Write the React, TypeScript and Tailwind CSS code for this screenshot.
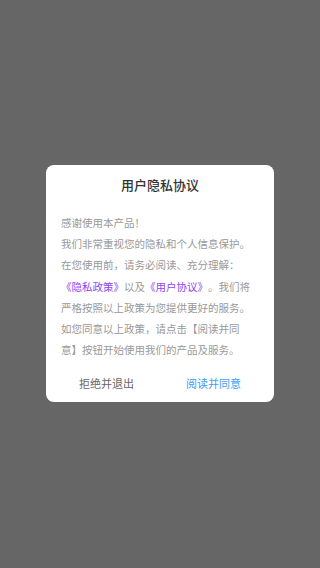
export default function App() {
  const font = { fontFamily: '"Noto Sans CJK SC", "Noto Sans", sans-serif' };
  return (
    <div
      className="w-[320px] h-[568px] bg-[#666666] flex items-start justify-center [text-spacing-trim:space-all]"
      style={font}
    >
      <div className="mt-[165px] w-[228px] h-[237px] bg-white rounded-[8px] flex flex-col">
        <div className="pt-[10px] text-center text-[13px] leading-[20px] font-medium text-[#333333]">
          用户隐私协议
        </div>
        <div className="mt-[17px] px-[15px] text-[10.5px] leading-[21.2px] text-[#999999]">
          <p>感谢使用本产品！</p>
          <p>我们非常重视您的隐私和个人信息保护。</p>
          <p>在您使用前，请务必阅读、充分理解：</p>
          <p>
            <span className="text-[#8c46f5]">《隐私政策》</span>以及
            <span className="text-[#8c46f5]">《用户协议》</span>
            。我们将严格按照以上政策为您提供更好的服务。如您同意以上政策，请点击【阅读并同意】按钮开始使用我们的产品及服务。
          </p>
        </div>
        <div className="mt-[13px] px-[7px] flex text-[11px] leading-[20px]">
          <button className="flex-1 text-center text-[#666666]">拒绝并退出</button>
          <button className="flex-1 text-center text-[#3d9df7]">阅读并同意</button>
        </div>
      </div>
    </div>
  );
}
